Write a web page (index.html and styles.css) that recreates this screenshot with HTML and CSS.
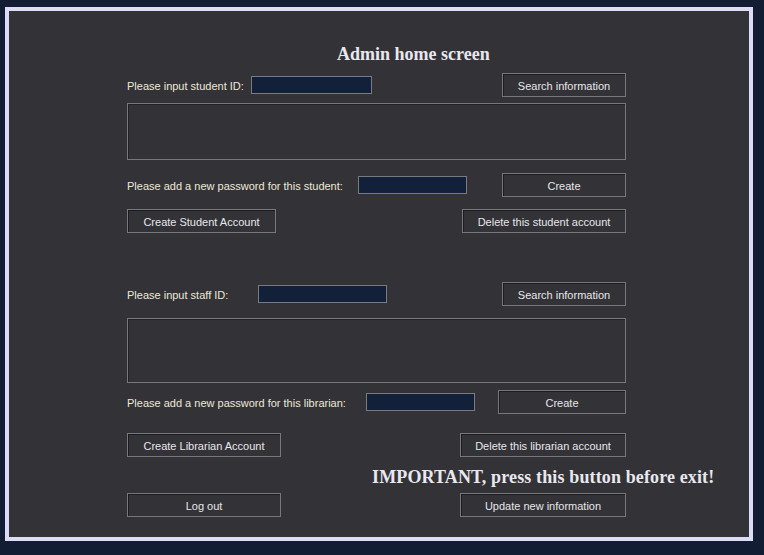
FILE: index.html
```html
<!DOCTYPE html>
<html>
<head>
<meta charset="utf-8">
<link rel="stylesheet" href="styles.css">
</head>
<body>
<div class="frame">
  <div class="panel">
    <h1 class="title">Admin home screen</h1>
    <div class="row r1">
      <span class="label">Please input student ID:</span>
      <span class="field f1"></span>
      <button class="btn b-search">Search information</button>
    </div>
    <div class="area a1"></div>
    <div class="row r3">
      <span class="label">Please add a new password for this student:</span>
      <span class="field f3"></span>
      <button class="btn b-create">Create</button>
    </div>
    <div class="row r4">
      <button class="btn b-cstudent">Create Student Account</button>
      <button class="btn b-dstudent">Delete this student account</button>
    </div>
    <div class="row r5">
      <span class="label">Please input staff ID:</span>
      <span class="field f5"></span>
      <button class="btn b-search">Search information</button>
    </div>
    <div class="area a2"></div>
    <div class="row r7">
      <span class="label">Please add a new password for this librarian:</span>
      <span class="field f7"></span>
      <button class="btn b-create2">Create</button>
    </div>
    <div class="row r8">
      <button class="btn b-wide">Create Librarian Account</button>
      <button class="btn b-dlib">Delete this librarian account</button>
    </div>
    <p class="important">IMPORTANT, press this button before exit!</p>
    <div class="row r9">
      <button class="btn b-wide">Log out</button>
      <button class="btn b-dlib">Update new information</button>
    </div>
  </div>
</div>
</body>
</html>
```
FILE: styles.css
```css
html, body {
  margin: 0;
  padding: 0;
  background: #121d33;
  width: 764px;
  height: 555px;
  overflow: hidden;
}
.frame {
  margin: 7px 0 0 5px;
  width: 740px;
  height: 526px;
  border: 4px solid #dcdcf8;
  background: #333237;
}
.panel {
  padding: 32px 0 0 118px;
  width: 499px;
  font-family: "Liberation Sans", Arial, sans-serif;
  font-size: 11px;
  color: #e6e6e6;
}
.title {
  margin: 0 0 0 210px;
  height: 23px;
  line-height: 23px;
  font-family: "Liberation Serif", "Times New Roman", serif;
  font-weight: bold;
  font-size: 18px;
  color: #e8e8ee;
}
.row {
  display: flex;
  align-items: center;
  height: 24px;
}
.label {
  white-space: nowrap;
  color: #ece8d8;
  padding-top: 2px;
}
.field {
  display: block;
  height: 16px;
  background: #13203a;
  border: 1px solid #7a7a80;
  box-sizing: content-box;
}
.btn {
  box-sizing: border-box;
  height: 24px;
  margin: 0;
  padding: 2px 0 0 0;
  background: #333237;
  border: 1px solid #77777d;
  box-shadow: inset 1px 1px 0 #1c1c20;
  color: #e6e6ea;
  font-family: "Liberation Sans", Arial, sans-serif;
  font-size: 11px;
  text-align: center;
}
.area {
  box-sizing: border-box;
  border: 1px solid #77777d;
  box-shadow: inset 1px 1px 0 #222226;
}
.r1 { margin-top: 7px; }
.f1 { width: 119px; margin-left: 7px; }
.b-search { width: 124px; margin-left: auto; }
.a1 { margin-top: 6px; height: 57px; }
.r3 { margin-top: 13px; }
.f3 { width: 107px; margin-left: 15px; }
.b-create { width: 124px; margin-left: auto; }
.r4 { margin-top: 12px; justify-content: space-between; }
.b-cstudent { width: 149px; }
.b-dstudent { width: 164px; }
.r5 { margin-top: 49px; }
.f5 { width: 127px; margin-left: 30px; }
.a2 { margin-top: 12px; height: 65px; }
.r7 { margin-top: 7px; }
.f7 { width: 107px; margin-left: 20px; }
.b-create2 { width: 128px; margin-left: auto; }
.r8 { margin-top: 19px; justify-content: space-between; }
.b-wide { width: 154px; }
.b-dlib { width: 166px; }
.important {
  margin: 9px 0 0 245px;
  height: 22px;
  line-height: 22px;
  white-space: nowrap;
  font-family: "Liberation Serif", "Times New Roman", serif;
  font-weight: bold;
  font-size: 18px;
  letter-spacing: 0.13px;
  color: #e8e8ee;
}
.r9 { margin-top: 5px; justify-content: space-between; }
```
